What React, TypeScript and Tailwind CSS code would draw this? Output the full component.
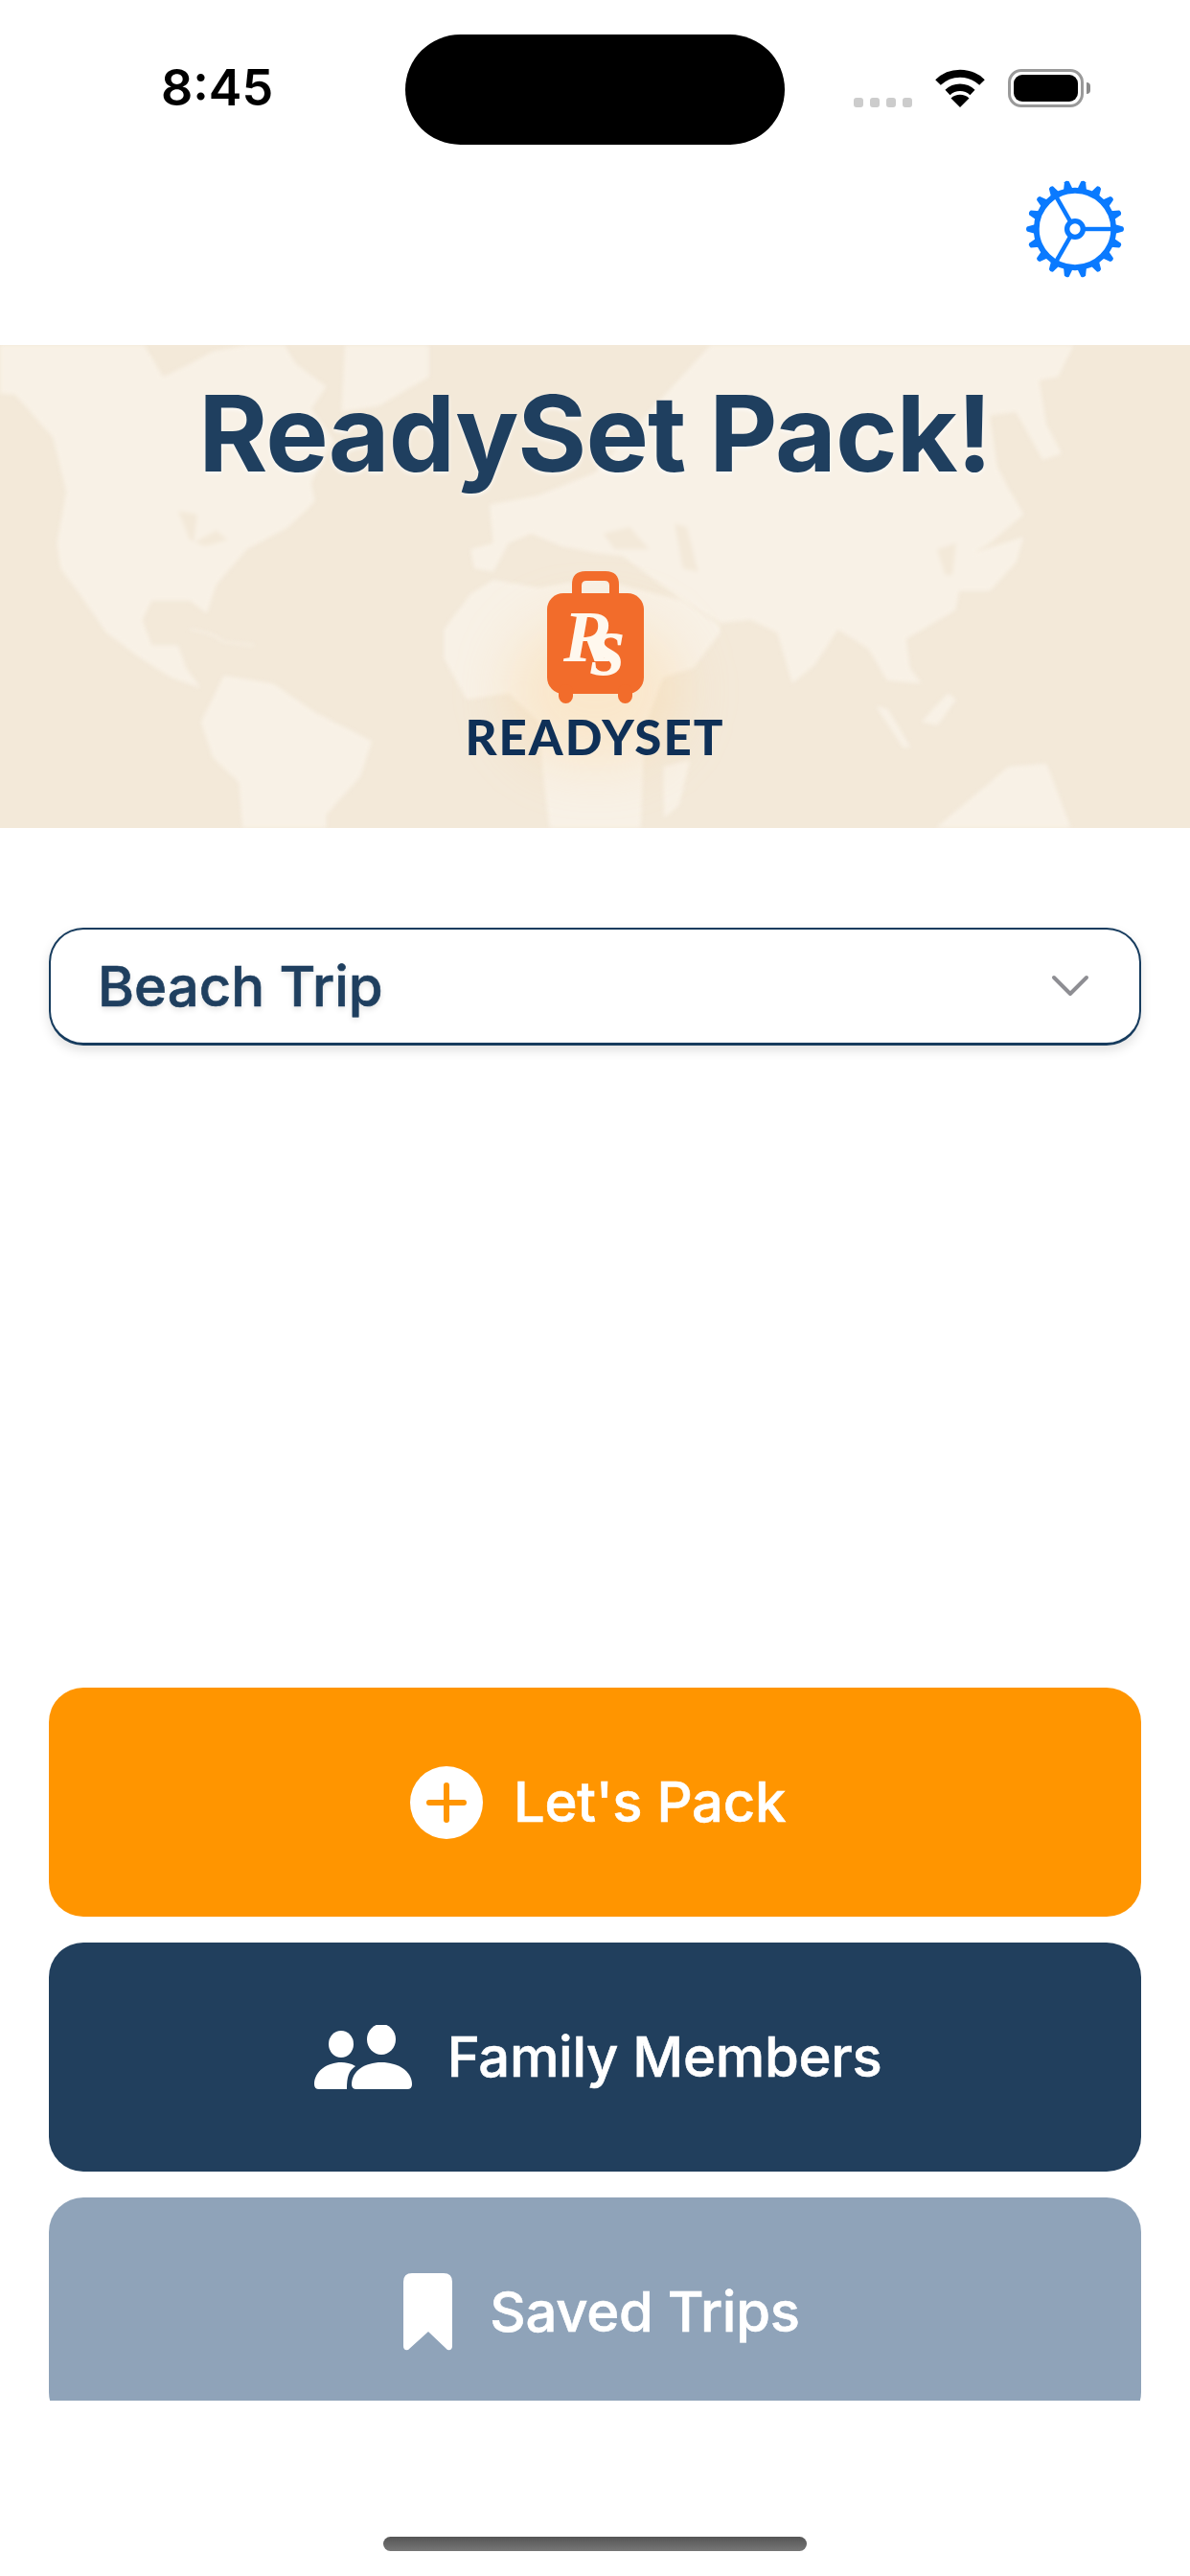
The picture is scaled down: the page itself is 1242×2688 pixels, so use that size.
import type { ReactNode } from 'react';

const uiFont = "font-['Inter','Noto_Sans',sans-serif]";

function WifiIcon() {
  return (
    <svg width="54" height="40" viewBox="0 0 54 40" aria-hidden="true">
      <path d="M4 14 A33 33 0 0 1 50 14" fill="none" stroke="#000" strokeWidth="8" />
      <path d="M14 24.5 A19 19 0 0 1 40 24.5" fill="none" stroke="#000" strokeWidth="7.5" />
      <path d="M27 40 L17.5 30.5 A14 14 0 0 1 36.5 30.5 Z" fill="#000" />
    </svg>
  );
}

function BatteryIcon() {
  return (
    <div className="flex items-center gap-[3px]">
      <div className="flex h-[40px] w-[79px] rounded-[14px] border-[3px] border-[#9a9a9a] p-[3px]">
        <div className="flex-1 rounded-[9px] bg-black" />
      </div>
      <div className="h-[12px] w-[4px] rounded-r-[4px] bg-[#8a8a8a]" />
    </div>
  );
}

function StatusBar() {
  return (
    <div className="grid grid-cols-[423px_396px_1fr] pt-[36px]">
      <div className={`${uiFont} pt-[28px] pl-[168px] text-[52px] leading-[56px] font-semibold text-black`}>8:45</div>
      <div className="h-[115px] rounded-[58px] bg-black" />
      <div className="flex items-start pt-[36px] pl-[72px]">
        <div className="mt-[30px] flex gap-[7px]">
          <span className="h-[10px] w-[10px] rounded-[3px] bg-[#cccccc]" />
          <span className="h-[10px] w-[10px] rounded-[3px] bg-[#cccccc]" />
          <span className="h-[10px] w-[10px] rounded-[3px] bg-[#cccccc]" />
          <span className="h-[10px] w-[10px] rounded-[3px] bg-[#cccccc]" />
        </div>
        <div className="ml-[23px]">
          <WifiIcon />
        </div>
        <div className="ml-[23px]">
          <BatteryIcon />
        </div>
      </div>
    </div>
  );
}

const GEAR_TEETH = Array.from({ length: 18 }, (_, i) => i * 20);

function GearIcon() {
  return (
    <svg width="104" height="104" viewBox="-53 -53 106 106" aria-hidden="true">
      {GEAR_TEETH.map((deg) => (
        <path key={deg} d="M-5 -42 L-2.5 -51 Q0 -53 2.5 -51 L5 -42 Z" fill="#0a7aff" transform={`rotate(${deg + 90})`} />
      ))}
      <circle r="41" fill="none" stroke="#0a7aff" strokeWidth="6" />
      <g stroke="#0a7aff" strokeWidth="4.5">
        <line x1="9" y1="0" x2="40" y2="0" />
        <line x1="-5" y1="-8" x2="-21" y2="-36" />
        <line x1="-5" y1="8" x2="-21" y2="36" />
      </g>
      <circle r="8.5" fill="none" stroke="#0a7aff" strokeWidth="5.5" />
    </svg>
  );
}

// coordinates taken from two side by side crops, hence the odd viewBox
function WorldMap() {
  return (
    <svg className="absolute inset-0 h-full w-full blur-[2px]" viewBox="0 0 3136 1512" preserveAspectRatio="none" aria-hidden="true">
      <g fill="#f8f1e6">
        <path d="M-20 -20 L370 -20 L430 100 L500 60 L560 20 L740 -20 L780 60 L860 130 L820 200 L880 300 L820 430 L830 490 L760 570 L650 640 L570 750 L545 840 L500 800 L400 800 L375 860 L400 940 L470 940 L490 1010 L530 1075 L450 1040 L370 980 L280 900 L210 780 L160 700 L150 620 L175 460 L140 290 L40 155 L-20 150 Z" />
        <path d="M910 -20 L1130 -20 L1130 100 L1000 190 L900 210 Z" />
        <path d="M590 1035 L720 1060 L830 1150 L980 1240 L950 1350 L860 1470 L860 1530 L640 1530 L630 1370 L560 1290 L530 1180 Z" />
        <path d="M1170 890 L1240 780 L1300 735 L1420 760 L1568 730 L1798 800 L1898 880 L1898 900 L1828 1010 L1748 1040 L1698 1200 L1688 1530 L1450 1530 L1430 1330 L1420 1180 L1340 1090 L1230 1110 L1170 980 Z" />
        <path d="M1240 640 L1250 700 L1300 710 L1340 620 L1400 590 L1480 630 L1568 650 L1640 660 L1788 790 L1898 870 L1978 860 L2048 900 L2088 1060 L2148 1000 L2208 890 L2288 950 L2338 1050 L2428 1060 L2398 1010 L2388 920 L2518 830 L2528 770 L2608 770 L2678 680 L2698 600 L2568 650 L2608 620 L2698 530 L2658 450 L2628 380 L2608 220 L2678 210 L2748 360 L2798 340 L2758 250 L2738 110 L2788 100 L2838 -20 L1888 -20 L1718 200 L1568 400 L1420 470 L1290 500 L1300 620 Z" />
        <path d="M1748 1320 L1818 1300 L1790 1440 L1750 1480 Z" />
        <path d="M2448 1530 L2658 1320 L2758 1310 L2828 1530 Z" />
        <path d="M2428 1180 L2498 1090 L2520 1110 L2470 1190 Z" />
        <path d="M2308 1130 L2340 1140 L2400 1260 L2380 1260 Z" />
      </g>
      <g fill="#f3e9d9">
        <path d="M470 520 L520 530 L510 620 L570 580 L600 610 L540 630 L500 610 Z" />
        <path d="M1778 560 L1810 570 L1840 710 L1800 700 Z" />
        <path d="M1590 590 L1660 570 L1710 640 L1620 640 Z" />
        <path d="M2470 640 L2520 620 L2510 720 L2490 720 Z" />
      </g>
      <g fill="none" stroke="#f8f1e6" strokeWidth="5">
        <path d="M500 890 Q560 900 590 930 L670 940" />
      </g>
    </svg>
  );
}

function Logo() {
  return (
    <div className="flex flex-col items-center">
      <div className="relative h-[138px] w-[101px]">
        <div className="absolute top-[50px] -left-[40px] h-[150px] w-[181px] rounded-full bg-[#ffcf8f]/30 blur-[28px]" />
        <svg className="absolute inset-0" width="101" height="138" viewBox="0 0 101 138">
          <path d="M26 26 V14 Q26 0 40 0 H61 Q75 0 75 14 V26 H65 V15 Q65 10 60 10 H41 Q36 10 36 15 V26 Z" fill="#f26c2b" />
          <rect x="0" y="23" width="101" height="105" rx="17" fill="#f26c2b" />
          <rect x="12" y="118" width="15" height="20" rx="7.5" fill="#f26c2b" />
          <rect x="74" y="118" width="15" height="20" rx="7.5" fill="#f26c2b" />
          <text x="17" y="94" fontFamily="Liberation Serif, serif" fontStyle="italic" fontWeight="700" fontSize="76" fill="#fff8ee">
            R
            <tspan dx="-22" dy="14" fontSize="92">s</tspan>
          </text>
        </svg>
      </div>
      <div className="relative mt-[12px] text-[51px] leading-[46px] font-black tracking-[2px] text-[#0f3057] font-['Lato',sans-serif]">READYSET</div>
    </div>
  );
}

function Banner() {
  return (
    <div className="relative h-[504px] bg-[#f3e9d9]">
      <div className="absolute inset-0 overflow-hidden">
        <WorldMap />
      </div>
      <div className="relative flex flex-col items-center pt-[37px]">
        <h1 className={`${uiFont} text-[110px] leading-[110px] font-bold tracking-[-1px] text-[#1f3f5f] [text-shadow:0_2px_4px_rgba(255,255,255,0.7)]`}>ReadySet Pack!</h1>
        <div className="mt-[89px]">
          <Logo />
        </div>
      </div>
    </div>
  );
}

function TripSelect() {
  return (
    <div className="mx-[51px] mt-[104px] flex h-[123px] items-center justify-between rounded-[36px] border-2 border-b-[3px] border-[#173c5e] bg-white pr-[52px] pl-[49px] shadow-[0_5px_12px_rgba(0,0,0,0.12)]">
      <span className={`${uiFont} text-[58px] font-medium text-[#1f3f5f] [-webkit-text-stroke:0.7px_#1f3f5f] [text-shadow:0_3px_6px_rgba(0,0,0,0.12)]`}>Beach Trip</span>
      <svg width="40" height="24" viewBox="0 0 40 24" aria-hidden="true">
        <path d="M3 3 L20 20 L37 3" fill="none" stroke="#8e8e93" strokeWidth="4" strokeLinecap="round" strokeLinejoin="round" />
      </svg>
    </div>
  );
}

function PlusIcon() {
  return (
    <svg width="76" height="76" viewBox="0 0 76 76" aria-hidden="true">
      <circle cx="38" cy="38" r="38" fill="#fff" />
      <path d="M38 20 V56 M20 38 H56" stroke="#ff9500" strokeWidth="6" strokeLinecap="round" />
    </svg>
  );
}

function FamilyIcon() {
  return (
    <svg width="102" height="68" viewBox="0 0 102 68" fill="#fff" aria-hidden="true">
      <ellipse cx="28" cy="20" rx="13" ry="14" />
      <ellipse cx="70" cy="15" rx="15" ry="16" />
      <path d="M0 62 C0 48 14 39 28 39 C33 39 38 40 43 43 C36 48 34 54 34 67 H5 Q0 67 0 62 Z" />
      <path d="M39 62 C39 48 53 39 70 39 C87 39 102 48 102 62 Q102 67 97 67 H44 Q39 67 39 62 Z" />
    </svg>
  );
}

function BookmarkIcon() {
  return (
    <svg width="51" height="81" viewBox="0 0 51 81" aria-hidden="true">
      <path d="M0 9 Q0 0 9 0 H42 Q51 0 51 9 V76 Q51 81 46 80 L26 61 L5 80 Q0 81 0 76 Z" fill="#fff" />
    </svg>
  );
}

function ActionButton({
  className,
  icon,
  gap,
  label,
}: {
  readonly className: string;
  readonly icon: ReactNode;
  readonly gap: string;
  readonly label: string;
}) {
  return (
    <button className={`flex h-[239px] w-full shrink-0 items-center justify-center rounded-[36px] ${gap} ${className}`}>
      {icon}
      <span className={`${uiFont} text-[58px] font-medium tracking-[-0.3px] text-white [-webkit-text-stroke:0.6px_#ffffff]`}>{label}</span>
    </button>
  );
}

export default function App() {
  return (
    <div className="flex h-[2688px] w-[1242px] flex-col overflow-hidden bg-white">
      <StatusBar />
      <div className="flex h-[209px] justify-end pt-[36px] pr-[68px]">
        <GearIcon />
      </div>
      <Banner />
      <TripSelect />
      <div className="mx-[51px] mt-[670px] flex h-[744px] flex-col gap-[27px] overflow-hidden">
        <ActionButton className="bg-[#ff9500] pl-[6px]" gap="gap-[32px]" icon={<PlusIcon />} label="Let's Pack" />
        <ActionButton className="bg-[#213f5d] pl-[6px]" gap="gap-[37px]" icon={<FamilyIcon />} label="Family Members" />
        <ActionButton className="bg-[#8fa3b9] pl-[14px]" gap="gap-[39px]" icon={<BookmarkIcon />} label="Saved Trips" />
      </div>
      <div className="mx-auto mt-[142px] h-[15px] w-[442px] rounded-full bg-gradient-to-b from-[#555555] to-[#777777]" />
    </div>
  );
}
